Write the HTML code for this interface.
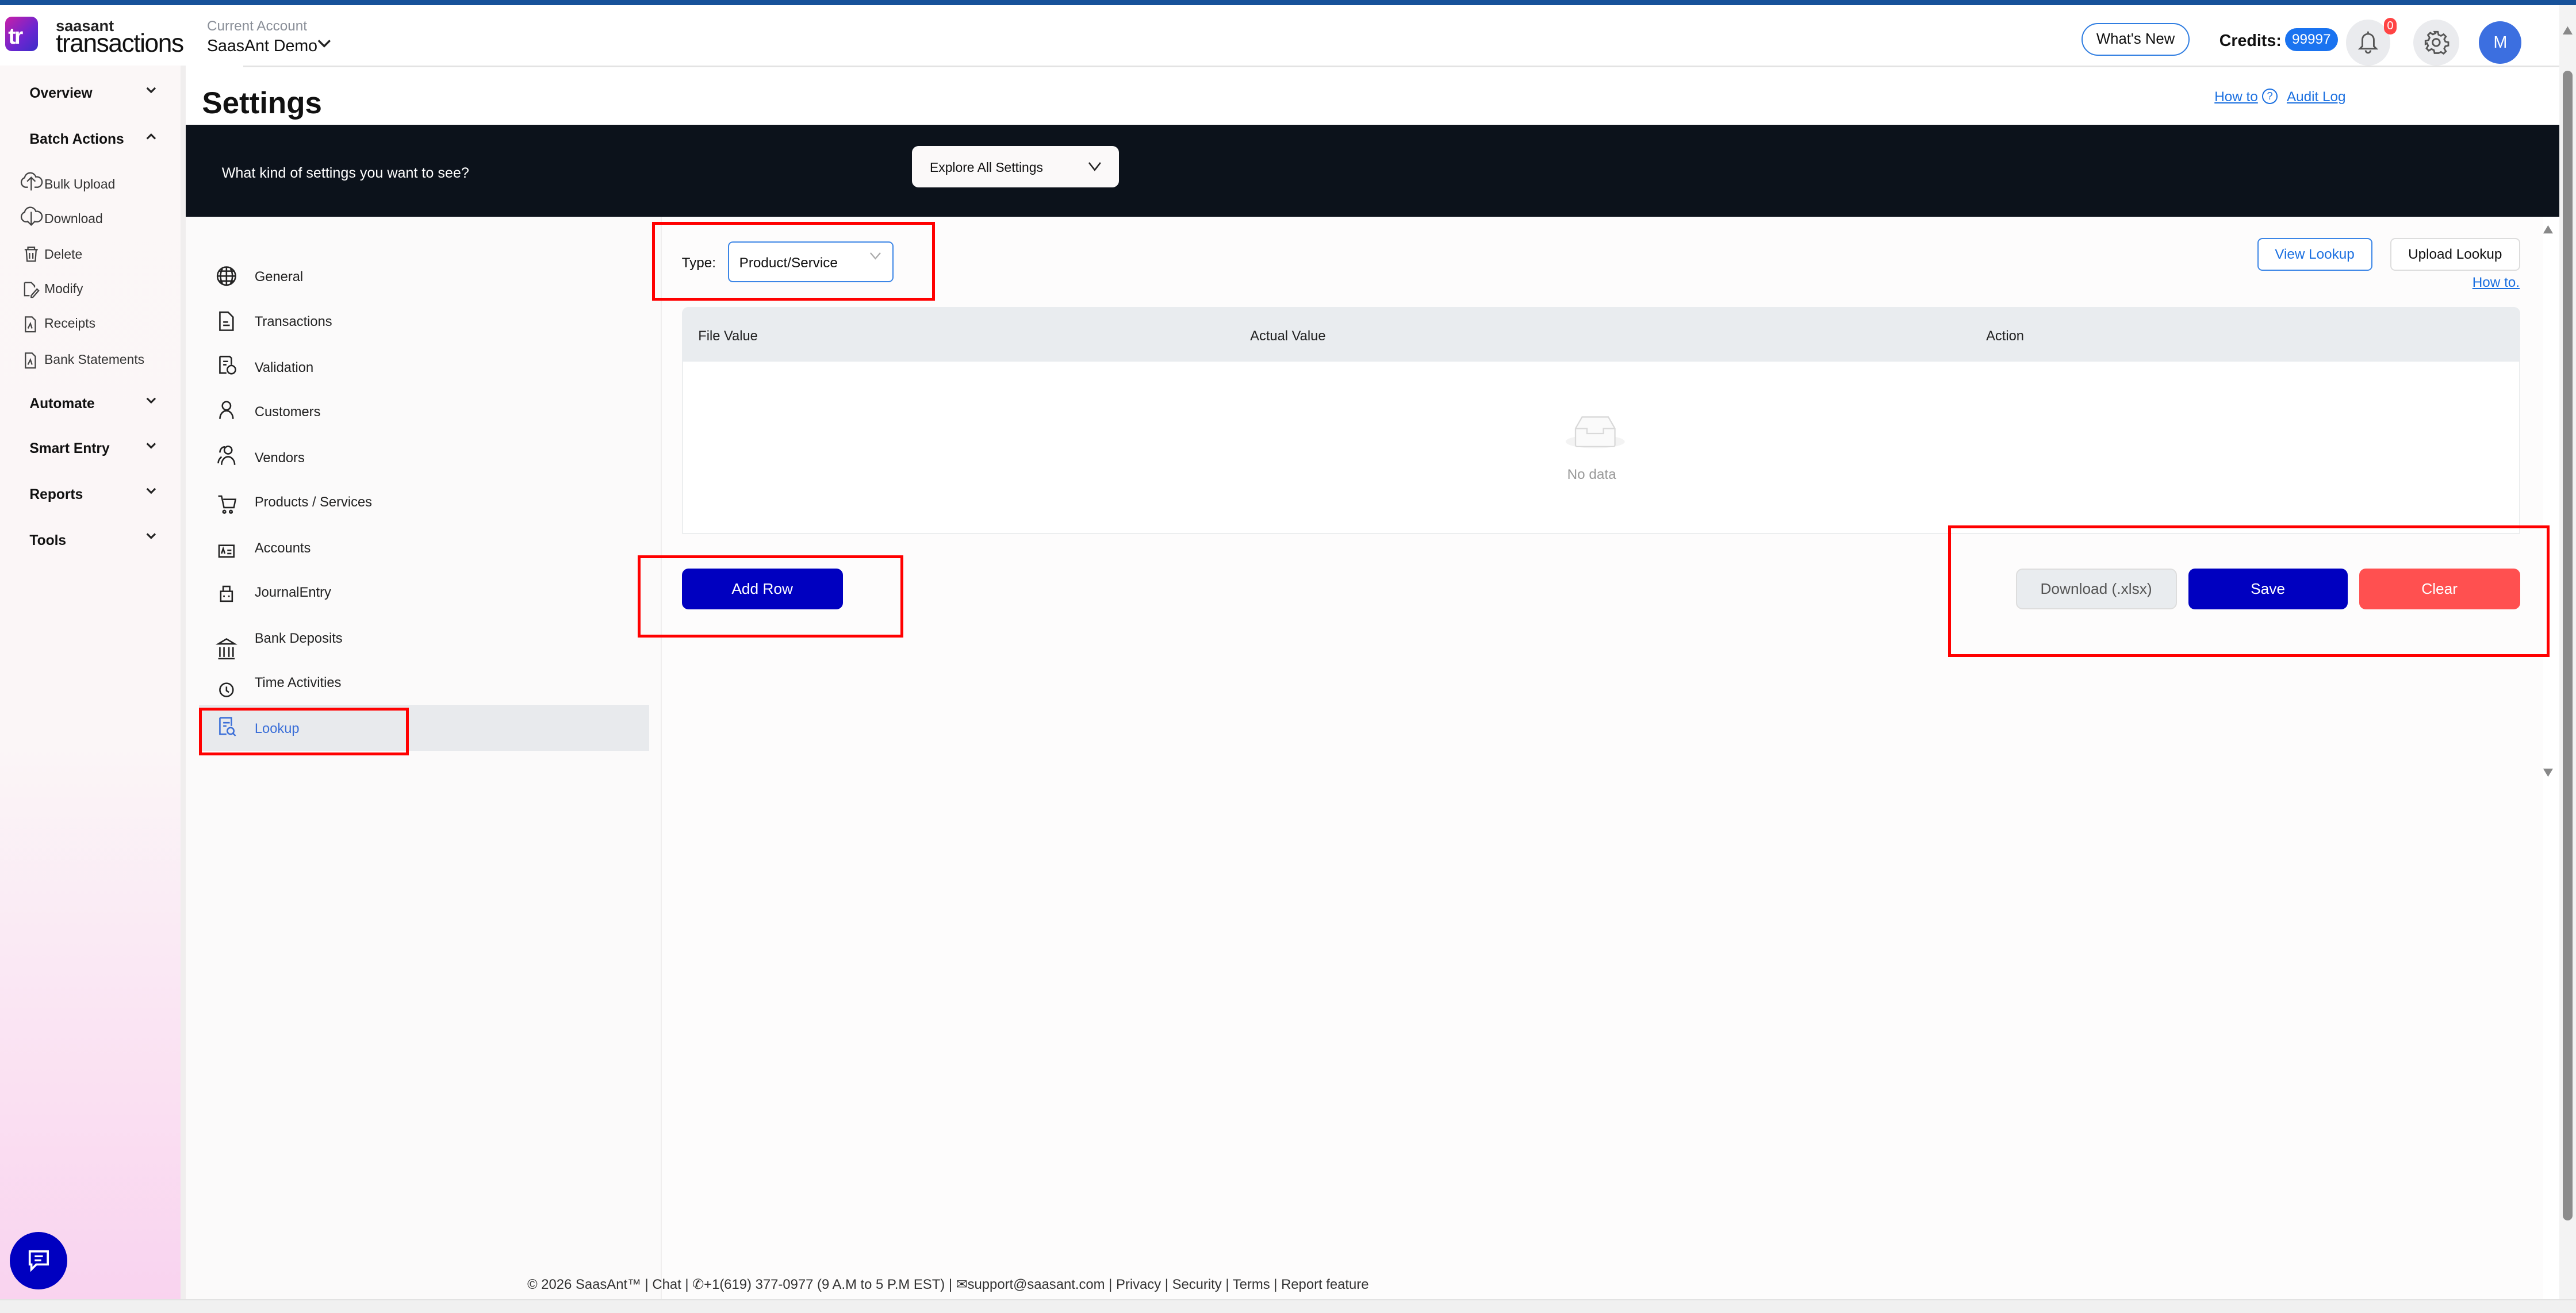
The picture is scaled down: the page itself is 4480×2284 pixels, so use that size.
<!DOCTYPE html>
<html><head><meta charset="utf-8"><style>
html,body{margin:0;padding:0;width:4480px;height:2284px;overflow:hidden;background:#fff}
#w{position:absolute;left:0;top:0;width:1568px;height:799.4px;zoom:2.857;font-family:"Liberation Sans",sans-serif;color:#111;overflow:hidden}
.a{position:absolute}
.t{position:absolute;white-space:nowrap;line-height:1;margin-top:1px}
.sb{font-size:8.6px;font-weight:bold}
.si{font-size:8px;color:#333}
.ni{font-size:8.3px;color:#222}
.btn{position:absolute;border-radius:4px;font-size:9.2px;display:flex;align-items:center;justify-content:center}
.rb{position:absolute;border:2px solid #f00;box-sizing:border-box}
</style></head><body><div id="w">
<div class="a" style="left:0;top:0;width:1568px;height:3px;background:#17529a"></div>
<div class="a" style="left:0;top:40px;width:110px;height:751px;background:linear-gradient(#fbf7f7 0%,#fbf6f7 55%,#f9d3ef 100%)"></div>
<div class="a" style="left:110px;top:40px;width:3px;height:751px;background:#f0eeee"></div>
<div class="a" style="left:3px;top:10px;width:20px;height:21px;border-radius:4px;background:linear-gradient(135deg,#c81fa8,#6a26d0 60%,#3a2ec8)"></div>
<div class="t" style="left:5px;top:14px;color:#fff;font-weight:bold;font-size:14px;letter-spacing:-1px">tr</div>
<div class="t" style="left:34px;top:10px;font-size:9.5px;font-weight:bold;color:#222">saasant</div>
<div class="t" style="left:34px;top:18px;font-size:15.5px;color:#111;letter-spacing:-0.5px">transactions</div>
<div class="t" style="left:126px;top:11px;font-size:8.5px;color:#8a8f98">Current Account</div>
<div class="t" style="left:126px;top:22px;font-size:10px;color:#111">SaasAnt Demo</div>
<svg class="a" style="left:193px;top:23px" width="9" height="7" viewBox="0 0 9 7"><path d="M1 1.5l3.5 3.5 3.5-3.5" fill="none" stroke="#222" stroke-width="1.2"/></svg>
<div class="a" style="left:148px;top:40px;width:1410px;height:1px;background:#e3e3e3"></div>
<div class="a" style="left:1267px;top:14px;width:66px;height:20px;border:1px solid #2f7de1;border-radius:11px;box-sizing:border-box;font-size:9px;display:flex;align-items:center;justify-content:center">What's New</div>
<div class="t" style="left:1351px;top:19px;font-size:10px;font-weight:bold">Credits:</div>
<div class="a" style="left:1391px;top:17px;width:32px;height:14px;border-radius:7px;background:#1a73f0;color:#fff;font-size:8.5px;display:flex;align-items:center;justify-content:center">99997</div>
<div class="a" style="left:1428px;top:12px;width:27px;height:28px;border-radius:50%;background:#eaebee"></div>
<svg class="a" style="left:1434px;top:17px" width="15" height="16" viewBox="0 0 15 16"><path d="M7.5 2v1M4 11V7a3.5 3.5 0 017 0v4l1.5 1.5h-10zM6 13.5a1.5 1.5 0 003 0" fill="none" stroke="#555" stroke-width="1"/></svg>
<div class="a" style="left:1451px;top:11px;width:8px;height:10px;border-radius:4px;background:#f44;color:#fff;font-size:7px;text-align:center;line-height:10px">0</div>
<div class="a" style="left:1469px;top:12px;width:28px;height:28px;border-radius:50%;background:#eaebee"></div>
<svg class="a" style="left:1475px;top:18px" width="16" height="16" viewBox="0 0 16 16"><circle cx="8" cy="8" r="2.2" fill="none" stroke="#555" stroke-width="1"/><path d="M7 1.5h2l.4 1.8 1.5.7 1.6-1 1.4 1.4-1 1.6.7 1.5 1.8.4v2l-1.8.4-.7 1.5 1 1.6-1.4 1.4-1.6-1-1.5.7L9 14.5H7l-.4-1.8-1.5-.7-1.6 1-1.4-1.4 1-1.6-.7-1.5L1.5 9V7l1.8-.4.7-1.5-1-1.6 1.4-1.4 1.6 1 1.5-.7z" fill="none" stroke="#555" stroke-width="1"/></svg>
<div class="a" style="left:1509px;top:13px;width:26px;height:26px;border-radius:50%;background:#3c6fe0;color:#fff;font-size:10px;display:flex;align-items:center;justify-content:center">M</div>
<div class="t sb" style="left:18px;top:52px">Overview</div>
<div class="t sb" style="left:18px;top:80px">Batch Actions</div>
<div class="t si" style="left:27px;top:107px">Bulk Upload</div>
<div class="t si" style="left:27px;top:128px">Download</div>
<div class="t si" style="left:27px;top:150px">Delete</div>
<div class="t si" style="left:27px;top:171px">Modify</div>
<div class="t si" style="left:27px;top:192px">Receipts</div>
<div class="t si" style="left:27px;top:214px">Bank Statements</div>
<div class="t sb" style="left:18px;top:241px">Automate</div>
<div class="t sb" style="left:18px;top:268px">Smart Entry</div>
<div class="t sb" style="left:18px;top:296px">Reports</div>
<div class="t sb" style="left:18px;top:324px">Tools</div>
<svg class="a" style="left:0;top:0" width="110" height="340" viewBox="0 0 110 340" fill="none" stroke="#222" stroke-width="1.1">
<path d="M89.5 53.5l2.5 2.5 2.5-2.5M89.5 84.5l2.5-2.5 2.5 2.5M89.5 242.5l2.5 2.5 2.5-2.5M89.5 270l2.5 2.5 2.5-2.5M89.5 297.5l2.5 2.5 2.5-2.5M89.5 325l2.5 2.5 2.5-2.5"/>
<g stroke="#444" stroke-width="0.8"><path d="M19 116v-8M16.5 110.5l2.5-2.5 2.5 2.5M17 114h-1.5a3 3 0 01-.5-5.8 3.5 3.5 0 016.8-.5A2.8 2.8 0 0123 114h-2"/>
<path d="M19 129v8M16.5 134.5l2.5 2.5 2.5-2.5M17 135h-1.5a3 3 0 01-.5-5.8 3.5 3.5 0 016.8-.5A2.8 2.8 0 0123 135h-2"/>
<path d="M15 152h8M17 152v-1.5h4v1.5M16 152l.5 7h5l.5-7M18 154v3.5M20 154v3.5"/>
<path d="M15 172h4l2 2v1M15 172v8h3M19 180l3.5-4 1 1-3.5 4h-1z"/>
<path d="M15.5 193h4l2 2v7h-6zM17 200l1.5-3 1 3"/>
<path d="M15.5 215h4l2 2v7h-6zM17 222l1.5-3 1 3"/></g></svg>
<div class="t" style="left:123px;top:53px;font-size:18.5px;font-weight:bold;color:#111">Settings</div>
<div class="t" style="left:1348px;top:54px;font-size:8.5px;color:#1a6fe0;text-decoration:underline">How to</div>
<div class="a" style="left:1377px;top:54px;width:8px;height:8px;border:1px solid #1a6fe0;border-radius:50%;font-size:6.5px;color:#1a6fe0;text-align:center;line-height:8px">?</div>
<div class="t" style="left:1392px;top:54px;font-size:8.5px;color:#1a6fe0;text-decoration:underline">Audit Log</div>
<div class="a" style="left:113px;top:76px;width:1446px;height:56px;background:#0c121b"></div>
<div class="t" style="left:135px;top:100px;font-size:8.8px;color:#fff">What kind of settings you want to see?</div>
<div class="a" style="left:555px;top:89px;width:126px;height:25px;background:#fbf9f9;border-radius:4px"></div>
<div class="t" style="left:566px;top:97px;font-size:8px;color:#111">Explore All Settings</div>
<svg class="a" style="left:662px;top:98px" width="9" height="7" viewBox="0 0 9 7"><path d="M1 1l3.5 4.5L8 1" fill="none" stroke="#222" stroke-width="0.9"/></svg>
<div class="a" style="left:113px;top:132px;width:289px;height:659px;background:#fbfafa"></div>
<div class="a" style="left:402px;top:132px;width:1px;height:659px;background:#f0eeee"></div>
<div class="a" style="left:121px;top:429px;width:274px;height:28px;background:#e8eaed"></div>
<div class="t ni" style="left:155px;top:164px">General</div>
<div class="t ni" style="left:155px;top:191px">Transactions</div>
<div class="t ni" style="left:155px;top:219px">Validation</div>
<div class="t ni" style="left:155px;top:246px">Customers</div>
<div class="t ni" style="left:155px;top:274px">Vendors</div>
<div class="t ni" style="left:155px;top:301px">Products / Services</div>
<div class="t ni" style="left:155px;top:329px">Accounts</div>
<div class="t ni" style="left:155px;top:356px">JournalEntry</div>
<div class="t ni" style="left:155px;top:384px">Bank Deposits</div>
<div class="t ni" style="left:155px;top:411px">Time Activities</div>
<div class="t ni" style="left:155px;top:439px;color:#3b6fd8">Lookup</div>
<svg class="a" style="left:130px;top:155px" width="16" height="300" viewBox="0 0 16 300" fill="none" stroke="#222" stroke-width="0.9">
<circle cx="8" cy="13" r="5.5"/><path d="M2.5 13h11M8 7.5v11M5.5 8.5c-1.5 3-1.5 6 0 9M10.5 8.5c1.5 3 1.5 6 0 9M3.5 10h9M3.5 16h9"/>
<path d="M4 35h5l3 3v8H4zM6 41h3M6 43h4"/>
<path d="M4 62h6l1 1v4M4 62v10h4M6 65h3M6 67h2"/><circle cx="11" cy="70" r="2.5"/>
<circle cx="8" cy="92" r="2.5"/><path d="M4 100c0-3 2-5 4-5s4 2 4 5"/>
<circle cx="9" cy="119" r="2.3"/><path d="M5 128c0-3 2-5 4-5s4 2 4 5M7 117c-2 0-3 2-3 3.5M3 127c0-2 1-3 2-4"/>
<path d="M3 147h2l1.5 7h6l1-5H6M7.5 156.5a.8.8 0 100 .1M11.5 156.5a.8.8 0 100 .1"/>
<path d="M3.5 177h9v7h-9zM5 182l1-3 1 3M8.5 180h2.5M8.5 182h2.5"/>
<path d="M4.5 205h7v6h-7zM6 205v-3h4v3M6 208h1M9 208h1"/>
<path d="M3 237l5-3 5 3zM4 239v6M6.5 239v6M9.5 239v6M12 239v6M3 246h10"/>
<circle cx="8" cy="265" r="4"/><path d="M8 263v2.5l1.5 1"/>
<g stroke="#3b6fd8"><path d="M4 282h7v5M4 282v10h4M6 285h4M6 287h2"/><circle cx="10.5" cy="290" r="2"/><path d="M12 291.5l1.5 1.5"/></g>
</svg>
<div class="rb" style="left:121px;top:431px;width:128px;height:29px"></div>
<div class="a" style="left:403px;top:132px;width:1145px;height:659px;background:#fdfcfc"></div>
<div class="t" style="left:415px;top:155px;font-size:8.5px">Type:</div>
<div class="a" style="left:443px;top:147px;width:101px;height:25px;border:1px solid #3b85e6;border-radius:3px;box-sizing:border-box;background:#fff"></div>
<div class="t" style="left:450px;top:155px;font-size:8.5px">Product/Service</div>
<svg class="a" style="left:529px;top:153px" width="8" height="6" viewBox="0 0 8 6"><path d="M1 1l3 3.5L7 1" fill="none" stroke="#aaa" stroke-width="0.8"/></svg>
<div class="rb" style="left:397px;top:135px;width:172px;height:48px"></div>
<div class="a" style="left:1374px;top:145px;width:70px;height:20px;border:1px solid #3b85e6;border-radius:3px;box-sizing:border-box;background:#fff;color:#1a6fe0;font-size:8.5px;display:flex;align-items:center;justify-content:center">View Lookup</div>
<div class="a" style="left:1455px;top:145px;width:79px;height:20px;border:1px solid #ddd;border-radius:3px;box-sizing:border-box;background:#fff;font-size:8.5px;display:flex;align-items:center;justify-content:center">Upload Lookup</div>
<div class="t" style="left:1505px;top:167px;font-size:8.5px;color:#1a6fe0;text-decoration:underline">How to.</div>
<div class="a" style="left:415px;top:187px;width:1119px;height:138px;background:#fff;border:1px solid #eceeef;box-sizing:border-box;border-radius:4px 4px 0 0"></div>
<div class="a" style="left:415px;top:187px;width:1119px;height:33px;background:#e9ecef;border-radius:4px 4px 0 0"></div>
<div class="t" style="left:425px;top:200px;font-size:8.3px;color:#222">File Value</div>
<div class="t" style="left:761px;top:200px;font-size:8.3px;color:#222">Actual Value</div>
<div class="t" style="left:1209px;top:200px;font-size:8.3px;color:#222">Action</div>
<svg class="a" style="left:952px;top:250px" width="38" height="24" viewBox="0 0 38 24"><ellipse cx="19" cy="19" rx="18" ry="4" fill="#f3f3f3"/><path d="M7 11l4-7h16l4 7v10a1 1 0 01-1 1H8a1 1 0 01-1-1z" fill="#fafafa" stroke="#d9d9d9" stroke-width="0.8"/><path d="M7 11h7v3h10v-3h7" fill="none" stroke="#d9d9d9" stroke-width="0.8"/></svg>
<div class="t" style="left:954px;top:284px;font-size:8.5px;color:#999">No data</div>
<div class="btn" style="left:415px;top:346px;width:98px;height:25px;background:#0000c0;color:#fff">Add Row</div>
<div class="rb" style="left:388px;top:338px;width:162px;height:50px"></div>
<div class="btn" style="left:1227px;top:346px;width:98px;height:25px;background:#e9ecef;color:#555;border:1px solid #ddd;box-sizing:border-box">Download (.xlsx)</div>
<div class="btn" style="left:1332px;top:346px;width:97px;height:25px;background:#0000c0;color:#fff">Save</div>
<div class="btn" style="left:1436px;top:346px;width:98px;height:25px;background:#ff5050;color:#fff">Clear</div>
<div class="rb" style="left:1186px;top:320px;width:366px;height:80px"></div>
<svg class="a" style="left:1547px;top:134px" width="8" height="342" viewBox="0 0 8 342"><path d="M1 8l3-5 3 5z" fill="#888"/><path d="M1 334l3 5 3-5z" fill="#888"/></svg>
<div class="a" style="left:1558px;top:3px;width:10px;height:788px;background:#f3f3f3"></div>
<div class="a" style="left:1560px;top:43px;width:6px;height:700px;border-radius:3px;background:#8c8c8c"></div>
<svg class="a" style="left:1559px;top:14px" width="8" height="8" viewBox="0 0 8 8"><path d="M1 7l3-5 3 5z" fill="#888"/></svg>
<div class="t" style="left:321px;top:777px;font-size:8.35px;color:#333">© 2026 SaasAnt™ | Chat | ✆+1(619) 377-0977 (9 A.M to 5 P.M EST) | ✉support@saasant.com | Privacy | Security | Terms | Report feature</div>
<div class="a" style="left:0;top:791px;width:1568px;height:9px;background:#f0f0f0;border-top:1px solid #e2e2e2"></div>
<div class="a" style="left:6px;top:750px;width:35px;height:35px;border-radius:50%;background:#0000c0"></div>
<svg class="a" style="left:16px;top:760px" width="15" height="15" viewBox="0 0 15 15"><path d="M2 2h11v8H6l-3 3v-3H2z" fill="none" stroke="#fff" stroke-width="1.3"/><path d="M5 5h5M5 7.5h4" stroke="#fff" stroke-width="1.2"/></svg>
</div></body></html>
